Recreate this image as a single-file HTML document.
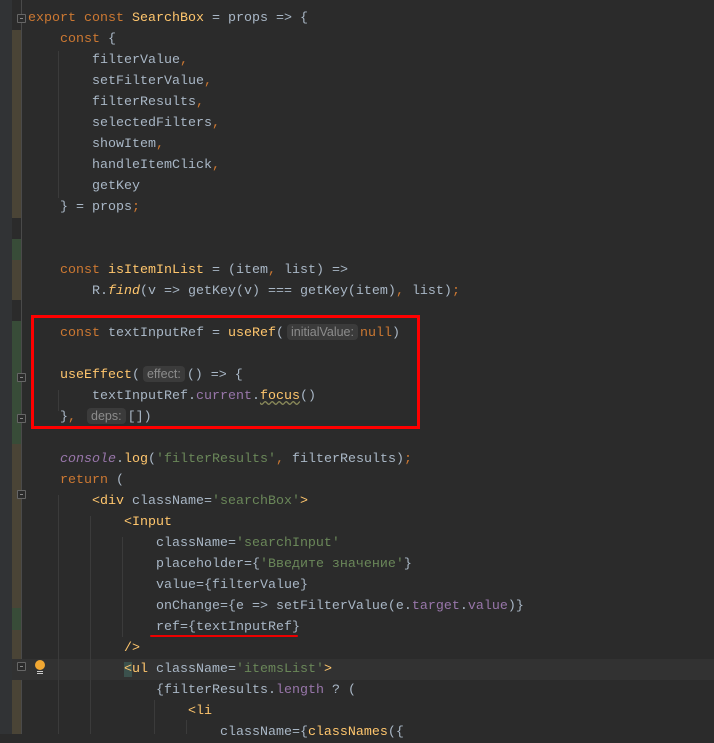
<!DOCTYPE html>
<html><head><meta charset="utf-8"><style>
html,body{margin:0;padding:0;width:714px;height:734px;overflow:hidden;background:#2b2b2b}
.g{position:absolute;left:0;top:0;width:12px;height:734px;background:#313335}
.b{position:absolute;left:21px;top:0;width:1px;height:734px;background:#4a4a4a}
.s{position:absolute;left:12px;width:9px}
.br{background:#4a4436}.gr{background:#384c38}
.code{position:absolute;left:28px;top:8px;font-family:"Liberation Mono","Noto Sans CJK SC",monospace;font-size:13.33px;color:#a9b7c6;white-space:pre;line-height:21px}
.l{display:block;height:21px}
.k{color:#cc7832}.f{color:#ffc66d}.st{color:#6a8759}.p{color:#9876aa}.i{color:#9876aa;font-style:italic}
.h{font-family:"Liberation Sans",sans-serif;font-size:12.5px;line-height:14px;color:#8c8c8c;background:#3b3b3b;border-radius:4px;padding:1px 4px;margin:0 2px 0 3px}
.cur{position:absolute;left:12px;top:659px;width:702px;height:21px;background:#323232}
.box{position:absolute;left:31px;top:315px;width:383px;height:108px;border:3px solid #ff0000}
.ul{position:absolute;left:150px;top:635px;width:148px;height:2px;background:#e00;border-radius:1px}
.ig{position:absolute;width:1px;background:#3b3b3b}
.fold{position:absolute;left:17px;width:9px;height:9px;border:1px solid #666;border-radius:1px;background:#2b2b2b;box-sizing:border-box}
.fold:after{content:"";position:absolute;left:2px;top:3px;width:3px;height:1px;background:#888}
</style></head><body>
<div class="g"></div>
<div class="s br" style="top:30px;height:188px"></div>
<div class="s gr" style="top:239px;height:21px"></div>
<div class="s br" style="top:260px;height:40px"></div>
<div class="s gr" style="top:321px;height:123px"></div>
<div class="s br" style="top:444px;height:164px"></div>
<div class="s gr" style="top:608px;height:22px"></div>
<div class="s br" style="top:630px;height:104px"></div>
<div class="b"></div>
<div class="cur"></div>
<div class="ig" style="left:58px;top:51px;height:147px"></div>
<div class="ig" style="left:58px;top:390px;height:21px"></div>
<div class="ig" style="left:58px;top:495px;height:239px"></div>
<div class="ig" style="left:90px;top:516px;height:218px"></div>
<div class="ig" style="left:122px;top:537px;height:100px"></div>
<div class="ig" style="left:154px;top:700px;height:34px"></div>
<div class="ig" style="left:186px;top:720px;height:14px"></div>
<div class="fold" style="top:14px"></div>
<div class="fold" style="top:373px"></div>
<div class="fold" style="top:414px"></div>
<div class="fold" style="top:490px"></div>
<div class="fold" style="top:662px"></div>
<div style="position:absolute;left:35px;top:660px;width:10px;height:10px;border-radius:50%;background:#f0a732"></div>
<div style="position:absolute;left:37px;top:671px;width:6px;height:1px;background:#ccc;box-shadow:0 2px 0 #ccc"></div>
<div class="code"><span class="k">export const </span><span class="f">SearchBox</span> = props => {
    <span class="k">const </span>{
        filterValue<span class="k">,</span>
        setFilterValue<span class="k">,</span>
        filterResults<span class="k">,</span>
        selectedFilters<span class="k">,</span>
        showItem<span class="k">,</span>
        handleItemClick<span class="k">,</span>
        getKey
    } = props<span class="k">;</span>


    <span class="k">const </span><span class="f">isItemInList</span> = (item<span class="k">, </span>list) =>
        R.<span class="f" style="font-style:italic">find</span>(v => getKey(v) === getKey(item)<span class="k">, </span>list)<span class="k">;</span>

    <span class="k">const </span>textInputRef = <span class="f">useRef</span>(<span class="h">initialValue:</span><span class="k">null</span>)

    <span class="f">useEffect</span>(<span class="h">effect:</span>() => {
        textInputRef.<span class="p">current</span>.<span class="f" style="text-decoration:underline wavy #8a8a5a">focus</span>()
    }<span class="k">, </span><span class="h">deps:</span>[])

    <span class="i">console</span>.<span class="f">log</span>(<span class="st">'filterResults'</span><span class="k">, </span>filterResults)<span class="k">;</span>
    <span class="k">return </span>(
        <span class="f">&lt;div </span>className=<span class="st">'searchBox'</span><span class="f">&gt;</span>
            <span class="f">&lt;Input</span>
                className=<span class="st">'searchInput'</span>
                placeholder={<span class="st">'Введите значение'</span>}
                value={filterValue}
                onChange={e => setFilterValue(e.<span class="p">target</span>.<span class="p">value</span>)}
                ref={textInputRef}
            <span class="f">/&gt;</span>
            <span class="f"><span style="background:#3b514d">&lt;</span>ul </span>className=<span class="st">'itemsList'</span><span class="f">&gt;</span>
                {filterResults.<span class="p">length</span> ? (
                    <span class="f">&lt;li</span>
                        className={<span class="f">classNames</span>({
</div>
<div class="box"></div>
<div class="ul"></div>
</body></html>
